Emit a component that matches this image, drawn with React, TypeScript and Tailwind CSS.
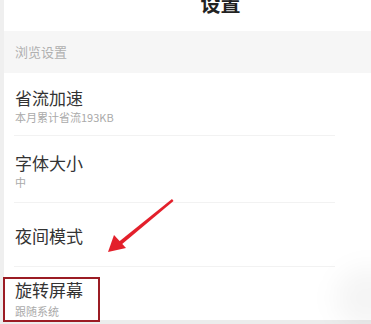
import React from 'react'

const font = { fontFamily: '"Noto Sans CJK SC", "Noto Sans", sans-serif' }

export default function App() {
    return (
        <div className="relative w-[371px] h-[324px] overflow-hidden bg-white" style={font}>
            <div className="flex h-[320px]">
                {/* left edge strip */}
                <div className="w-[4px] bg-[#efefef]" />

                <div className="flex-1 flex flex-col">
                    {/* Header */}
                    <div className="h-[31px] flex justify-center pl-[66px]">
                        <div className="-mt-[6px] text-[20px] leading-[20px] font-bold text-[#222]">设置</div>
                    </div>

                    {/* Section */}
                    <div className="h-[42px] bg-[#f6f6f6] flex items-center pl-[11px] text-[13px] text-[#b0b0b0]">
                        浏览设置
                    </div>

                    {/* Rows */}
                    <div className="h-[62px] pl-[11px] pt-[16px]">
                        <div className="text-[17px] leading-[17px] text-[#333]">省流加速</div>
                        <div className="mt-[6px] text-[11px] leading-[11px] text-[#aaa]">本月累计省流193KB</div>
                    </div>
                    <div className="mx-[10px] mr-[36px] border-t border-[#f2f2f2]" />
                    <div className="h-[66px] pl-[11px] pt-[18px]">
                        <div className="text-[17px] leading-[17px] text-[#333]">字体大小</div>
                        <div className="mt-[6px] text-[11px] leading-[11px] text-[#aaa]">中</div>
                    </div>
                    <div className="mx-[10px] mr-[36px] border-t border-[#f2f2f2]" />
                    <div className="h-[63px] pl-[11px] pt-[24px]">
                        <div className="text-[17px] leading-[17px] text-[#333]">夜间模式</div>
                    </div>
                    <div className="mx-[10px] mr-[36px] border-t border-[#f2f2f2]" />
                    <div className="flex-1 pl-[11px] pt-[14px]">
                        <div className="text-[17px] leading-[17px] text-[#333]">旋转屏幕</div>
                        <div className="mt-[8px] text-[11px] leading-[11px] text-[#aaa]">跟随系统</div>
                    </div>
                </div>
            </div>
            <div className="h-[4px] bg-[#ececec]" />

            {/* soft shadow bottom right */}
            <div className="absolute left-[335px] top-[268px] w-[70px] h-[60px] rounded-full bg-black/[0.04] blur-md" />

            {/* highlight box */}
            <div className="absolute left-[3px] top-[277px] w-[97px] h-[45px] border-[2.5px] border-[#9b1c24]" />

            {/* arrow */}
            <svg className="absolute left-0 top-0" width="371" height="324" viewBox="0 0 371 324">
                <path d="M172 199 L173.5 201 L121 245 L118.5 242 Z" fill="#e3202b" />
                <path d="M108 252 L114 235 L126 248 Z" fill="#e3202b" />
            </svg>
        </div>
    )
}
